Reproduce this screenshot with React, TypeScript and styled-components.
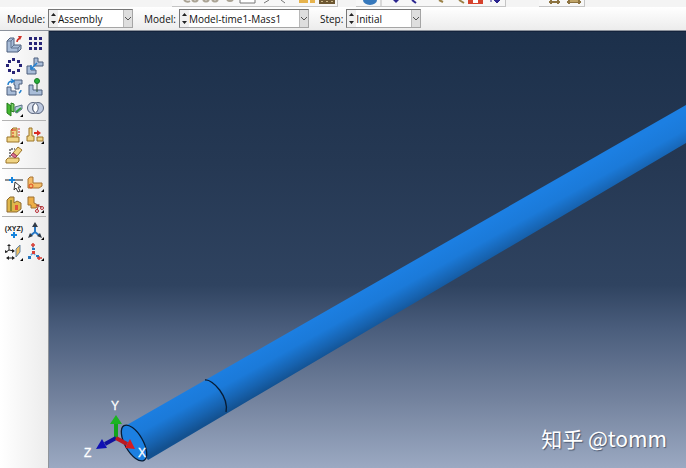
import React from 'react';
import styled, { createGlobalStyle } from 'styled-components';

const GlobalStyle = createGlobalStyle`
  * { box-sizing: border-box; }
  body { margin: 0; font-family: "Open Sans", "Noto Sans", sans-serif; font-size: 10px; color: #111; }
`;

const Window = styled.div`
  display: flex;
  flex-direction: column;
  min-height: 100vh;
  overflow: hidden;
  background: #f1f1f1;
`;

const ToolStrip = styled.header`
  display: flex;
  height: 7px;
  padding-left: 172px;
  background: #f4f4f4;
  overflow: hidden;
`;

const StripGroup = styled.div<{ $width: number; $gap: number }>`
  flex: none;
  width: ${(p) => p.$width}px;
  margin-right: ${(p) => p.$gap}px;
  background: #f7f7f7;
  border-right: 1px solid #c4c4c4;
  border-bottom: 1px solid #c4c4c4;
  svg { display: block; }
`;

const ContextBar = styled.form`
  display: flex;
  align-items: center;
  height: 24px;
  padding-left: 7px;
  background: linear-gradient(#ffffff, #ececec);
  border-bottom: 1px solid #8c929c;
`;

const FieldLabel = styled.label`
  white-space: nowrap;
`;

const Combo = styled.span<{ $width: number }>`
  display: flex;
  flex: none;
  width: ${(p) => p.$width}px;
  height: 19px;
  margin: 0 11px 0 3px;
  background: #fff;
  border: 1px solid #a5a5a5;
  border-top-color: #777;
  border-left-color: #777;
`;

const Spinner = styled.span`
  display: flex;
  flex: none;
  width: 9px;
  background: #f0f0f0;
`;

const ComboSelect = styled.select`
  flex: 1;
  min-width: 0;
  padding: 0;
  border: 0;
  outline: 0;
  appearance: none;
  background: transparent;
  font: inherit;
  color: #111;
`;

const DropArrow = styled.span`
  display: flex;
  flex: none;
  width: 9px;
  align-items: center;
  justify-content: center;
  background: #dedede;
  border-left: 1px solid #b8b8b8;
`;

const Workspace = styled.main`
  display: flex;
  flex: 1;
`;

const Toolbox = styled.nav`
  flex: none;
  width: 49px;
  background: linear-gradient(90deg, #ffffff, #ececec);
  border-right: 1px solid #8f949b;
`;

const ToolGroup = styled.div`
  display: grid;
  grid-template-columns: 21px 21px;
  grid-auto-rows: 21px;
  margin: 0 2px;
  padding: 4px 0 1px 2px;
  & + & { border-top: 1px solid #b4b4b4; }
`;

const ToolButton = styled.button`
  display: block;
  padding: 0;
  border: 0;
  background: none;
  svg { display: block; }
`;

const Viewport = styled.section`
  position: relative;
  flex: 1;
  overflow: hidden;
  border-top: 1px solid #14233c;
  background: linear-gradient(#1c304b 0%, #253853 30%, #2f4360 58%, #4a5d7c 68%, #75849f 85%, #9ba9c2 100%);
`;

const Scene = styled.svg`
  position: absolute;
  inset: 0;
  width: 100%;
  height: 100%;
`;

const Watermark = styled.p`
  position: absolute;
  right: 19px;
  bottom: 15px;
  margin: 0;
  font: 21px/30px "Noto Sans CJK SC", sans-serif;
  color: #fff;
  text-shadow: 1px 1px 1px #4d5a70;
`;

const steel = { fill: '#a9bdd8', stroke: '#4d5f7d', strokeWidth: 1 };
const brass = { fill: '#f0d484', stroke: '#9b7429', strokeWidth: 1 };
const More = () => <path d="M19 16v3h-3z" fill="#000" />;

const tools: { name: string; more?: boolean; art: React.ReactNode }[][] = [
  [
    {
      name: 'Create Instance',
      art: (
        <>
          <path d="M3 6l3-3h4v7h7v4l-3 3H3z" {...steel} />
          <path d="M3 6h4v7h7v4M7 6l3-3M7 13l3-3M14 13l3-3" fill="none" stroke="#60738f" />
          <path d="M13 7c0-2 1-3 3-4" fill="none" stroke="#cf2f26" strokeWidth="1.5" />
          <path d="M14 1h4l-2 4z" fill="#cf2f26" />
        </>
      ),
    },
    {
      name: 'Linear Pattern',
      art: <path d="M4 2h3v3H4zM9 2h3v3H9zM14 2h3v3h-3zM4 7h3v3H4zM9 7h3v3H9zM14 7h3v3h-3zM4 12h3v3H4zM9 12h3v3H9zM14 12h3v3h-3z" fill="#272477" />,
    },
    {
      name: 'Radial Pattern',
      art: <path d="M8 2h3v3H8zM13 4h3v3h-3zM15 8h3v3h-3zM13 13h3v3h-3zM8 15h3v3H8zM4 13h3v3H4zM2 8h3v3H2zM4 4h3v3H4z" fill="#272477" />,
    },
    {
      name: 'Translate Instance',
      art: (
        <>
          <path d="M9 2h4v4h5v4H9zM2 10h4v4h5v4H2z" {...steel} />
          <path d="M6 13l6-6M6 9v4h4" fill="none" stroke="#2480cf" strokeWidth="1.5" />
        </>
      ),
    },
    {
      name: 'Rotate Instance',
      art: (
        <>
          <path d="M3 10h4v4h5v4H3zM10 3h8v4h-3v5h-4V8h-1z" {...steel} />
          <path d="M4 8c0-3 2-4 5-4M7 2l3 2-3 2M15 16c2-1 2-2 2-3" fill="none" stroke="#2480cf" strokeWidth="1.5" />
        </>
      ),
    },
    {
      name: 'Translate To',
      art: (
        <>
          <path d="M4 8h4v5h9v5H4z" {...steel} />
          <path d="M12 5v10" stroke="#2f5036" />
          <circle cx="12" cy="4" r="2.5" fill="#27ae38" stroke="#147c22" />
        </>
      ),
    },
    {
      name: 'Create Constraint',
      more: true,
      art: (
        <>
          <path d="M3 5l4 3v10l-4-3z" fill="#42b72f" stroke="#257b1c" />
          <path d="M7 5l3 1v8l-3-1z" fill="#7ed06b" stroke="#257b1c" />
          <path d="M11 9l7-2v4l-5 4-2-1z" fill="#bbcee0" stroke="#5b7087" />
          <path d="M12 14l5-4" stroke="#2ba137" strokeWidth="2" />
        </>
      ),
    },
    {
      name: 'Merge or Cut Instances',
      art: (
        <>
          <circle cx="8" cy="10" r="5.5" fill="#d4dbe9" stroke="#59657d" />
          <circle cx="13" cy="10" r="5.5" fill="#bcc8df" stroke="#59657d" />
          <path d="M10.5 5a6 6 0 010 10 6 6 0 010-10" fill="#fff" stroke="#59657d" />
        </>
      ),
    },
  ],
  [
    {
      name: 'Interaction',
      more: true,
      art: (
        <>
          <path d="M7 5l2-2h4v10H7z" {...brass} />
          <path d="M3 12h12v5H3z" {...brass} />
          <path d="M9 4v8M14 4h2M14 7h2M14 10h2M7 5h5" stroke="#d43024" strokeDasharray="2 1" />
        </>
      ),
    },
    {
      name: 'Position Constraint',
      more: true,
      art: (
        <>
          <path d="M4 3h3v8h2v5H2v-5h2zM12 12h6v4h-6z" {...brass} />
          <path d="M9 8h4" stroke="#d92b22" strokeWidth="2" />
          <path d="M12 5l4 3-4 3z" fill="#d92b22" />
        </>
      ),
    },
    {
      name: 'Suppress Feature',
      art: (
        <>
          <path d="M2 14l2-2h11v3l-2 2H2z" {...brass} />
          <path d="M6 11V3h5" fill="none" stroke="#111" strokeDasharray="2 1" />
          <path d="M9 7l5-6 4 3-5 6z" {...brass} />
          <path d="M9 7l4 3-2 2-4-3z" fill="#d86d8d" stroke="#9c4059" />
        </>
      ),
    },
  ],
  [
    {
      name: 'Partition Edge',
      more: true,
      art: (
        <>
          <path d="M1 7h5M11 7h8" stroke="#222" />
          <path d="M5 7h6M8 4v6" stroke="#1684dc" strokeWidth="2" />
          <path d="M11 9l6 5h-3l2 4-2 1-2-4-2 2z" fill="#fff" stroke="#333" />
        </>
      ),
    },
    {
      name: 'Partition Face',
      more: true,
      art: (
        <>
          <path d="M3 6l2-2h3v6h9v3l-3 2H3z" fill="#f2bd69" stroke="#a87332" />
          <circle cx="6" cy="13" r="2" fill="none" stroke="#df4a23" />
        </>
      ),
    },
    {
      name: 'Partition Cell',
      more: true,
      art: (
        <>
          <path d="M3 6l3-3h4v6l3-2 4 2v6l-4 3H3z" fill="#dfb64b" stroke="#8d6930" />
          <path d="M7 6v11" stroke="#8f8a31" strokeWidth="2" />
          <path d="M11 11h3v5h-3z" fill="#df543d" />
        </>
      ),
    },
    {
      name: 'Remove Faces',
      more: true,
      art: (
        <>
          <path d="M3 3h6v6l4 2-2 3H6v-3H3z" fill="#edae48" stroke="#9e7033" />
          <path d="M11 11l6 2M14 10l-2 6" stroke="#a23c3a" />
          <circle cx="17" cy="14" r="1.5" fill="none" stroke="#b82d35" />
          <circle cx="12" cy="17" r="1.5" fill="none" stroke="#b82d35" />
        </>
      ),
    },
  ],
  [
    {
      name: 'Datum Point',
      more: true,
      art: (
        <>
          <text x="10" y="10" textAnchor="middle" fontFamily="Liberation Sans" fontSize="7" fontWeight="700" fill="#222">(XYZ)</text>
          <path d="M7 14h6M10 11v6" stroke="#1684dc" strokeWidth="2" />
        </>
      ),
    },
    {
      name: 'Datum Coordinate System',
      more: true,
      art: (
        <>
          <path d="M10 11V4M10 11l-5 4M10 11l5 4" stroke="#2878c4" strokeWidth="2" />
          <path d="M10 1l3 5H7zM3 17l2-5 3 3zM17 17l-5-2 3-3z" fill="#333c48" />
        </>
      ),
    },
    {
      name: 'Datum Plane',
      more: true,
      art: (
        <>
          <path d="M12 7l4-4v7l-4 5z" fill="#efbe5d" stroke="#6685a4" />
          <path d="M5 3v5M5 8l5 1M5 8l-3 2M3 16h7" stroke="#222" />
          <path d="M3 4l2-2 2 2zM8 7l3 2-3 2zM1 11V8l3 2zM2 16l3-2v4zM11 16l-3-2v4z" fill="#222" />
        </>
      ),
    },
    {
      name: 'Query Axis',
      more: true,
      art: (
        <>
          <path d="M8 4v7M8 11l-4 4M8 11l6 5" fill="none" stroke="#69a4db" strokeWidth="1.5" strokeDasharray="3 2" />
          <path d="M8 1v4M6 3h4M12 16h5M14 14v4" stroke="#d83e35" strokeWidth="1.5" />
          <path d="M7 9h3v3H7z" fill="#d83e35" />
          <path d="M3 14h3v3H3zM7 6h3v2H7zM11 13h3v2h-3z" fill="#2676be" />
        </>
      ),
    },
  ],
];

const fields = [
  { id: 'module', label: 'Module:', value: 'Assembly', width: 85 },
  { id: 'model', label: 'Model:', value: 'Model-time1-Mass1', width: 130 },
  { id: 'step', label: 'Step:', value: 'Initial', width: 75 },
];

function ContextField({ id, label, value, width }: (typeof fields)[number]) {
  return (
    <>
      <FieldLabel htmlFor={id}>{label}</FieldLabel>
      <Combo $width={width}>
        <Spinner aria-hidden="true">
          <svg width="9" height="17"><path d="M2 6l2.5-3L7 6zM2 11l2.5 3L7 11z" fill="#222" /></svg>
        </Spinner>
        <ComboSelect id={id} defaultValue={value}>
          <option>{value}</option>
        </ComboSelect>
        <DropArrow aria-hidden="true">
          <svg width="8" height="6"><path d="M1 1l3 3 3-3" fill="none" stroke="#555" /></svg>
        </DropArrow>
      </Combo>
    </>
  );
}

export default function App() {
  return (
    <>
      <GlobalStyle />
      <Window>
        <ToolStrip aria-hidden="true">
          <StripGroup $width={166} $gap={18}>
            <svg width="165" height="6">
              <path d="M12 0q3 3 6 1M20 0q3 3 6 0M31 0q3 3 6 0M40 0q3 3 6 0M55 0q3 2 6 0" fill="none" stroke="#aaa394" strokeWidth="2" />
              <path d="M68 0v3h15V0M97 0l-5 3M109 0l4 3" fill="#fff" stroke="#777" />
              <path d="M127 0h9v3h-9zM138 0h5v3h-5z" fill="#e6b34d" />
              <path d="M147 0h16v4h-16z" fill="#6d5732" />
              <path d="M149 1h2v1h-2zM154 1h2v1h-2zM159 1h2v1h-2z" fill="#cdb888" />
            </svg>
          </StripGroup>
          <StripGroup $width={150} $gap={33}>
            <svg width="149" height="6">
              <path d="M7 0a7 5 0 0014 0z" fill="#3779bc" />
              <path d="M25 0v6" stroke="#bbb" />
              <path d="M37 0h6l-3 3z" fill="#2b258f" />
              <path d="M56 0l4 3" stroke="#2b258f" strokeWidth="2" />
              <path d="M83 0l4 2M103 0l5 3" stroke="#9b8146" strokeWidth="2" />
              <path d="M112 0h15v4h-15z" fill="#d6422d" />
              <path d="M117 0h5v3h-5z" fill="#fff" />
              <path d="M135 0v2M138 0h6l-3 3z" fill="#2b258f" stroke="#2b258f" />
            </svg>
          </StripGroup>
          <StripGroup $width={46} $gap={0}>
            <svg width="45" height="6">
              <path d="M10 2h11M12 0v4M19 0v4M28 2h14M30 0v4M40 0v4" stroke="#8d7340" strokeWidth="2" />
              <path d="M31 0h8v2h-8z" fill="#c0a468" />
            </svg>
          </StripGroup>
        </ToolStrip>

        <ContextBar>
          {fields.map((f) => <ContextField key={f.id} {...f} />)}
        </ContextBar>

        <Workspace>
          <Toolbox aria-label="Assembly tools">
            {tools.map((group, i) => (
              <ToolGroup key={i}>
                {group.map((tool) => (
                  <ToolButton key={tool.name} type="button" aria-label={tool.name}>
                    <svg width="21" height="21" viewBox="0 0 21 21">
                      {tool.art}
                      {tool.more && <More />}
                    </svg>
                  </ToolButton>
                ))}
              </ToolGroup>
            ))}
          </Toolbox>

          <Viewport aria-label="Model view">
            <Scene viewBox="0 0 637 436" preserveAspectRatio="xMinYMax slice">
              <defs>
                <linearGradient id="rod" gradientUnits="userSpaceOnUse" x1="337" y1="245" x2="357" y2="281">
                  <stop offset="0" stopColor="#1c7fe2" />
                  <stop offset="0.4" stopColor="#1b7ad9" />
                  <stop offset="0.75" stopColor="#1763b0" />
                  <stop offset="1" stopColor="#135190" />
                </linearGradient>
              </defs>
              <path d="M76 394L637 73V111L99 428z" fill="url(#rod)" />
              <path d="M156 348C164 347 180 365 177 380" fill="none" stroke="#071c35" strokeWidth="1.3" />
              <ellipse cx="85" cy="411" rx="9" ry="20" transform="rotate(-30 85 411)" fill="#1c80e2" stroke="#071c35" strokeWidth="1.3" />
              <path d="M67 406V391" stroke="#12a51b" strokeWidth="4" />
              <path d="M61 392l6-9 6 9z" fill="#1bb421" />
              <path d="M67 406l-11 6" stroke="#11129c" strokeWidth="4" />
              <path d="M47 417l6-10 5 9z" fill="#1010b4" />
              <path d="M67 406l11 6" stroke="#bd1820" strokeWidth="4" />
              <path d="M86 417l-10-1 5-9z" fill="#d51c20" />
              <g fill="#fff" stroke="#fff" strokeWidth="0.3" fontFamily="Liberation Sans, sans-serif" fontSize="12">
                <text x="62" y="378">Y</text>
                <text x="35" y="425">Z</text>
                <text x="89" y="425">X</text>
              </g>
            </Scene>
            <Watermark>知乎 @tomm</Watermark>
          </Viewport>
        </Workspace>
      </Window>
    </>
  );
}
